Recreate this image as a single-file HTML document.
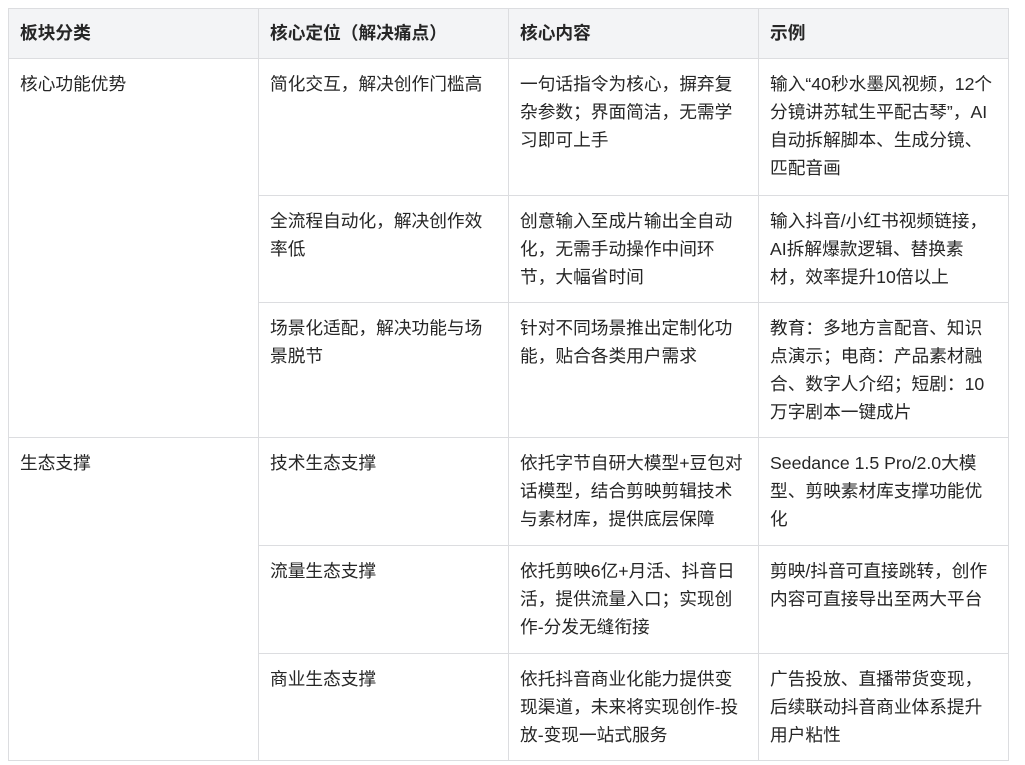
<!DOCTYPE html>
<html><head><meta charset="utf-8"><style>
html,body{margin:0;padding:0;background:#fff;width:1025px;height:765px;overflow:hidden}
table{position:absolute;left:8px;top:8px;border-collapse:collapse;table-layout:fixed;width:1000px;font-family:"Liberation Sans","Noto Sans CJK SC",sans-serif;font-size:17.7px;color:#262626}
td,th{border:1px solid #dcdde0;padding:11px 11px 10px;vertical-align:top;line-height:28px;white-space:nowrap;text-align:left}
th{background:#f3f4f6;font-weight:bold;padding:10px 11px 9px}
col{width:250px}
</style></head><body>
<table><colgroup><col><col><col><col></colgroup>
<tr style="height:50px"><th>板块分类</th><th>核心定位（解决痛点）</th><th>核心内容</th><th>示例</th></tr>
<tr style="height:137px"><td rowspan="3">核心功能优势</td><td>简化交互，解决创作门槛高</td><td>一句话指令为核心，摒弃复<br>杂参数；界面简洁，无需学<br>习即可上手</td><td>输入“40秒水墨风视频，12个<br>分镜讲苏轼生平配古琴”，AI<br>自动拆解脚本、生成分镜、<br>匹配音画</td></tr>
<tr style="height:107px"><td>全流程自动化，解决创作效<br>率低</td><td>创意输入至成片输出全自动<br>化，无需手动操作中间环<br>节，大幅省时间</td><td>输入抖音/小红书视频链接，<br>AI拆解爆款逻辑、替换素<br>材，效率提升10倍以上</td></tr>
<tr style="height:135px"><td>场景化适配，解决功能与场<br>景脱节</td><td>针对不同场景推出定制化功<br>能，贴合各类用户需求</td><td>教育：多地方言配音、知识<br>点演示；电商：产品素材融<br>合、数字人介绍；短剧：10<br>万字剧本一键成片</td></tr>
<tr style="height:108px"><td rowspan="3">生态支撑</td><td>技术生态支撑</td><td>依托字节自研大模型+豆包对<br>话模型，结合剪映剪辑技术<br>与素材库，提供底层保障</td><td>Seedance 1.5 Pro/2.0大模<br>型、剪映素材库支撑功能优<br>化</td></tr>
<tr style="height:108px"><td>流量生态支撑</td><td>依托剪映6亿+月活、抖音日<br>活，提供流量入口；实现创<br>作-分发无缝衔接</td><td>剪映/抖音可直接跳转，创作<br>内容可直接导出至两大平台</td></tr>
<tr style="height:107px"><td>商业生态支撑</td><td>依托抖音商业化能力提供变<br>现渠道，未来将实现创作-投<br>放-变现一站式服务</td><td>广告投放、直播带货变现，<br>后续联动抖音商业体系提升<br>用户粘性</td></tr>
</table>
</body></html>
